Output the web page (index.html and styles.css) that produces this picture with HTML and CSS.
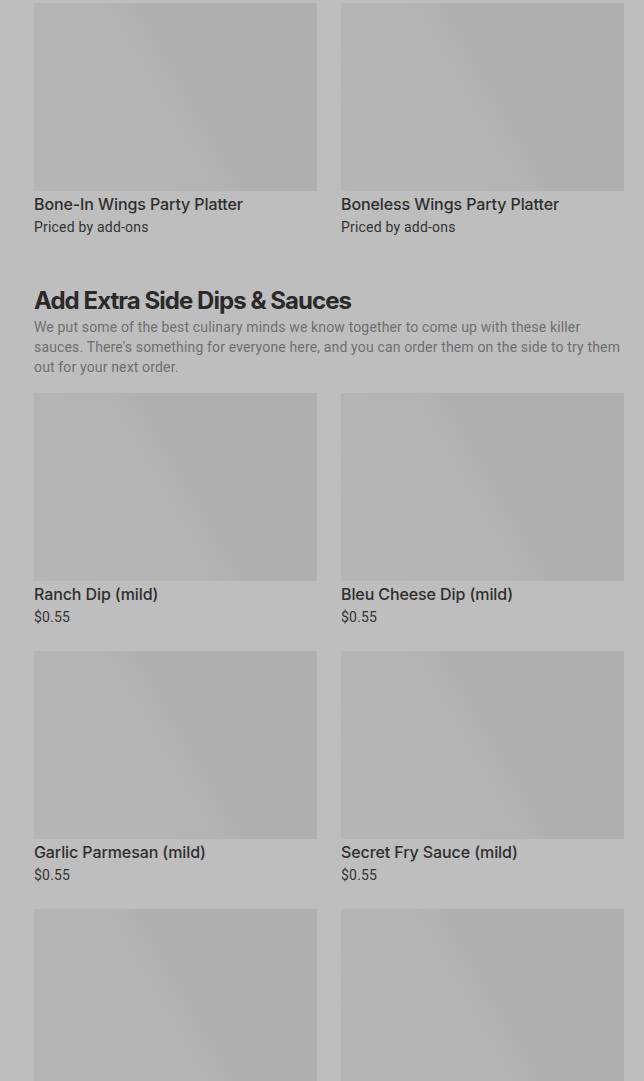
FILE: index.html
```html
<!DOCTYPE html>
<html lang="en">
<head>
    <meta charset="UTF-8">
    <meta name="viewport" content="width=device-width, initial-scale=1.0">
    <title>Menu</title>
    <link rel="stylesheet" href="styles.css">
</head>
<body>
    <div class="page">
        <div class="grid">
            <div class="card">
                <div class="thumb"></div>
                <div class="title">Bone-In Wings Party Platter</div>
                <div class="sub">Priced by add-ons</div>
            </div>
            <div class="card">
                <div class="thumb"></div>
                <div class="title">Boneless Wings Party Platter</div>
                <div class="sub">Priced by add-ons</div>
            </div>
        </div>

        <div class="section">
            <h2>Add Extra Side Dips &amp; Sauces</h2>
            <p class="desc">We put some of the best culinary minds we know together to come up with these killer sauces. There's something for everyone here, and you can order them on the side to try them out for your next order.</p>
            <div class="grid">
                <div class="card">
                    <div class="thumb"></div>
                    <div class="title">Ranch Dip (mild)</div>
                    <div class="sub">$0.55</div>
                </div>
                <div class="card">
                    <div class="thumb"></div>
                    <div class="title">Bleu Cheese Dip (mild)</div>
                    <div class="sub">$0.55</div>
                </div>
                <div class="card">
                    <div class="thumb"></div>
                    <div class="title">Garlic Parmesan (mild)</div>
                    <div class="sub">$0.55</div>
                </div>
                <div class="card">
                    <div class="thumb"></div>
                    <div class="title">Secret Fry Sauce (mild)</div>
                    <div class="sub">$0.55</div>
                </div>
                <div class="card">
                    <div class="thumb"></div>
                </div>
                <div class="card">
                    <div class="thumb"></div>
                </div>
            </div>
        </div>
    </div>
</body>
</html>
```

FILE: styles.css
```css
body {
    margin: 0;
    background-color: #bebebe;
    font-family: Inter, "Noto Sans", sans-serif;
    overflow: hidden;
}
.page {
    padding: 3px 20px 0 34px;
}
.grid {
    display: grid;
    grid-template-columns: 1fr 1fr;
    column-gap: 24px;
    row-gap: 24px;
}
.thumb {
    height: 188px;
    background: linear-gradient(60deg, #b5b5b5 0%, #b4b4b4 45%, #afafaf 55%, #afafaf 100%);
    margin-bottom: 1px;
}
.title {
    font-size: 16px;
    font-weight: 500;
    line-height: 24px;
    color: #2e2e2e;
    letter-spacing: -0.1px;
}
.sub {
    margin-top: 1px;
    font-family: Roboto, sans-serif;
    font-size: 14px;
    line-height: 20px;
    color: #333;
    letter-spacing: 0.2px;
}
.section {
    margin-top: 48px;
}
h2 {
    margin: 0;
    font-size: 24px;
    font-weight: 700;
    line-height: 32px;
    color: #2a2a2a;
    letter-spacing: -0.95px;
}
.desc {
    margin: 0 0 16px;
    font-family: Roboto, sans-serif;
    font-size: 14px;
    line-height: 20px;
    color: #6e6e6e;
    letter-spacing: 0.15px;
}
```
